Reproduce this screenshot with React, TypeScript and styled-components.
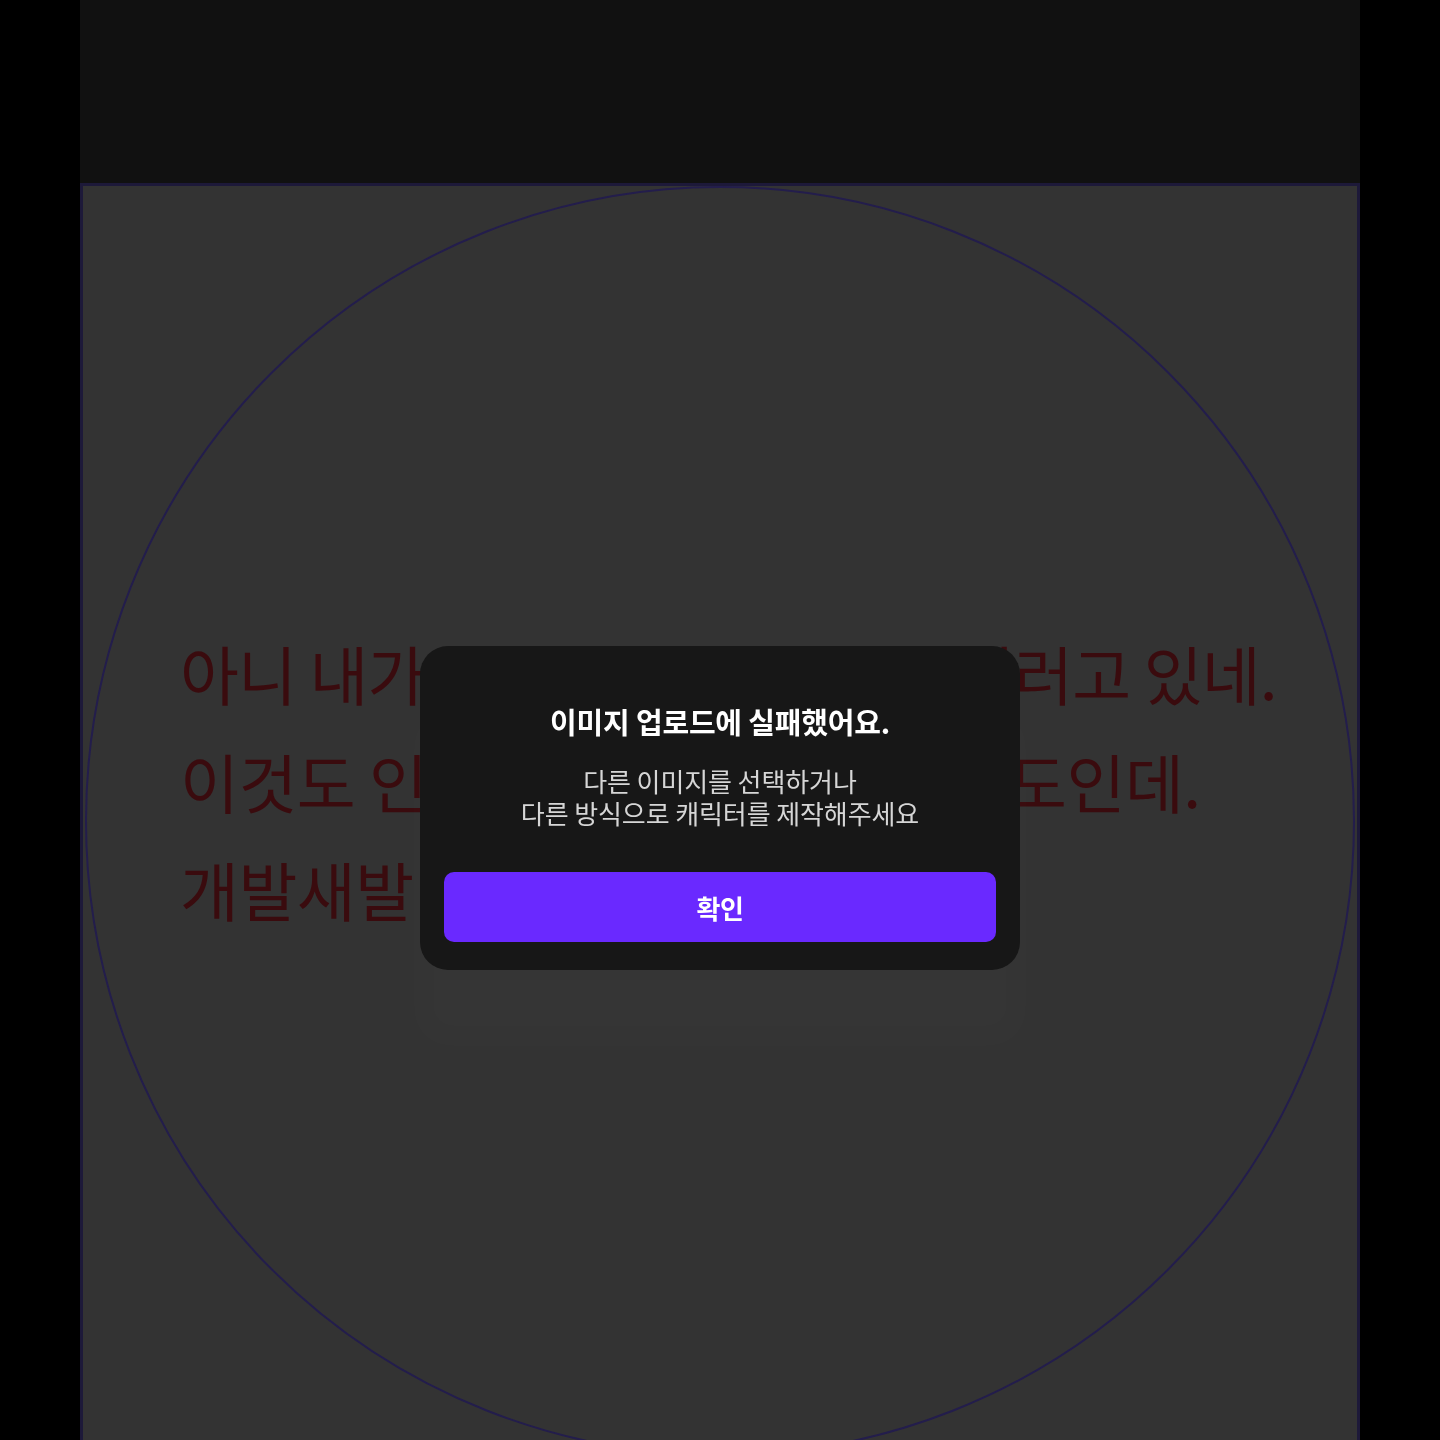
import styled, { createGlobalStyle } from "styled-components"

const GlobalStyle = createGlobalStyle`
  html, body {
    margin: 0;
    padding: 0;
    background: #000;
    font-family: "Noto Sans CJK KR", "Noto Sans", sans-serif;
  }
  * { box-sizing: border-box; }
`

const Page = styled.div`
  width: 1280px;
  height: 1440px;
  margin: 0 auto;
  display: flex;
  flex-direction: column;
  overflow: hidden;
`

const Header = styled.div`
  height: 183px;
  flex-shrink: 0;
  background: #111111;
`

const Stage = styled.div`
  flex: 1;
  background: #333333;
  border: 3px solid #1d1939;
  border-bottom: none;
  overflow: hidden;
`

const Circle = styled.div`
  width: 1270px;
  height: 1270px;
  margin: 0 auto;
  border: 2px solid #231d4c;
  border-radius: 50%;
  padding: 430px 0 0 93px;
`

const Line = styled.div<{ $spacing: number }>`
  font-size: 64px;
  line-height: 108px;
  color: #3a0b0e;
  white-space: nowrap;
  letter-spacing: ${(p) => p.$spacing}px;
`

const Overlay = styled.div`
  position: fixed;
  inset: 0;
  display: flex;
  justify-content: center;
  align-items: flex-start;
  padding-top: 646px;
`

const Modal = styled.div`
  width: 600px;
  background: #171717;
  border-radius: 28px;
  padding: 57px 24px 28px;
  display: flex;
  flex-direction: column;
  align-items: center;
  box-shadow: 0 70px 20px 10px rgba(255, 255, 255, 0.01);
`

const Title = styled.h2`
  margin: 0;
  font-size: 29px;
  line-height: 36px;
  font-weight: 700;
  color: #ffffff;
  letter-spacing: -0.2px;
`

const Message = styled.p`
  margin: 26px 0 0;
  font-size: 26px;
  line-height: 32px;
  font-weight: 400;
  color: #d6d6d6;
  text-align: center;
  letter-spacing: -0.1px;
`

const ConfirmButton = styled.button`
  margin-top: 43px;
  width: 100%;
  height: 70px;
  border: none;
  border-radius: 10px;
  background: #6a29ff;
  color: #ffffff;
  font-family: inherit;
  font-size: 26px;
  font-weight: 700;
  letter-spacing: -0.3px;
  cursor: pointer;
`

const lines = [
  { text: "아니 내가 지금 여기서 뭘 하자 이러고 있네.", spacing: -0.9 },
  { text: "이것도 인생이란 게 나름 인생 정도인데.", spacing: -0.5 },
  { text: "개발새발 그려본 글씨", spacing: -0.5 },
]

const App = () => {
  return (
    <>
      <GlobalStyle />
      <Page>
        <Header />
        <Stage>
          <Circle>
            {lines.map((line) => (
              <Line key={line.text} $spacing={line.spacing}>
                {line.text}
              </Line>
            ))}
          </Circle>
        </Stage>
      </Page>
      <Overlay>
        <Modal>
          <Title>이미지 업로드에 실패했어요.</Title>
          <Message>
            다른 이미지를 선택하거나
            <br />
            다른 방식으로 캐릭터를 제작해주세요
          </Message>
          <ConfirmButton>확인</ConfirmButton>
        </Modal>
      </Overlay>
    </>
  )
}

export default App
